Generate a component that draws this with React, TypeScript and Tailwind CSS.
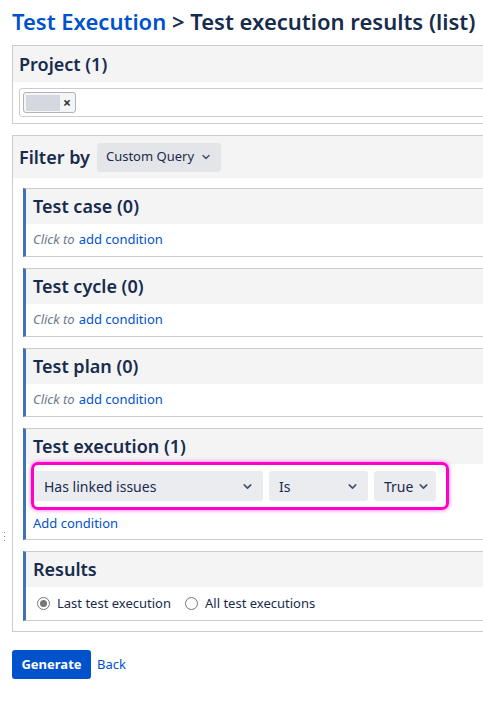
import { ChevronDown } from 'lucide-react';

const font = { fontFamily: '"Noto Sans", "Open Sans", sans-serif' };

function Select({ label, width, small }: { label: string; width: string; small?: boolean }) {
  return (
    <div className={`${width} h-[30px] rounded-[3px] bg-[#ebecf0] flex items-center justify-between gap-[4px] pl-[10px] ${small ? 'pr-[6px]' : 'pr-[9px]'} text-[14px] text-[#172b4d]`}>
      <span>{label}</span>
      <ChevronDown className="w-[13px] h-[13px] text-[#42526e] shrink-0" strokeWidth={3} />
    </div>
  );
}

function AddCondition() {
  return (
    <div className="h-[32px] flex items-center px-[7px] text-[13px]">
      <span className="italic text-[#6b778c]">Click to</span>
      <span className="ml-[4px] text-[#0052cc]">add condition</span>
    </div>
  );
}

function Section({ title, children }: { title: string; children: React.ReactNode }) {
  return (
    <div className="border-y border-[#ccc] border-l-[3px] border-l-[#3d74b1] bg-white">
      <div className="h-[35px] bg-[#f4f4f4] flex items-center px-[7px] text-[18px] font-semibold text-[#172b4d]">
        {title}
      </div>
      {children}
    </div>
  );
}

function Radio({ checked, label }: { checked?: boolean; label: string }) {
  return (
    <label className="flex items-center gap-[7px]">
      <span className="w-[13px] h-[13px] rounded-full border border-[#767676] bg-white flex items-center justify-center">
        {checked && <span className="w-[7px] h-[7px] rounded-full bg-[#777]" />}
      </span>
      <span>{label}</span>
    </label>
  );
}

export default function App() {
  return (
    <div className="relative w-[483px] h-[703px] overflow-hidden bg-white pl-[12px] pt-[5px]" style={font}>
      <h1 className="leading-[32px] text-[22px] font-semibold text-[#172b4d] whitespace-nowrap">
        <span className="text-[#0052cc]">Test Execution</span> &gt; Test execution results (list)
      </h1>

      <div className="mt-[8px] w-[520px] border border-[#ccc]">
        <div className="h-[36px] bg-[#f4f4f4] flex items-center px-[6px] text-[18px] font-semibold text-[#172b4d]">
          Project (1)
        </div>
        <div className="p-[6px]">
          <div className="h-[29px] border border-[#ccc] rounded-[3px] flex items-center px-[3px]">
            <div className="h-[21px] w-[53px] border border-[#b3b3b3] rounded-[3px] bg-[#f4f5f7] flex items-center pl-[2px] gap-[3px]">
              <span className="w-[34px] h-[16px] bg-[#d5d8de]" />
              <span className="text-[14px] font-bold text-[#333] leading-none">×</span>
            </div>
          </div>
        </div>
      </div>

      <div className="mt-[11px] w-[520px] border border-[#ccc]">
        <div className="h-[42px] bg-[#f4f4f4] flex items-center px-[6px] gap-[7px]">
          <span className="text-[18px] font-semibold text-[#172b4d]">Filter by</span>
          <div className="h-[29px] w-[124px] rounded-[3px] bg-[#e4e5e9] flex items-center justify-center gap-[6px] text-[13px] text-[#172b4d]">
            <span>Custom Query</span>
            <ChevronDown className="w-[12px] h-[12px] text-[#42526e]" strokeWidth={3} />
          </div>
        </div>
        <div className="p-[10px] flex flex-col gap-[11px]">
          <Section title="Test case (0)">
            <AddCondition />
          </Section>
          <Section title="Test cycle (0)">
            <AddCondition />
          </Section>
          <Section title="Test plan (0)">
            <AddCondition />
          </Section>
          <Section title="Test execution (1)">
            <div className="px-[7px] pt-[7px] pb-[6px]">
              <div className="relative flex gap-[6px] ml-[1px]">
                <Select label="Has linked issues" width="w-[229px]" />
                <Select label="Is" width="w-[99px]" />
                <Select label="True" width="w-[62px]" small />
                <div className="absolute left-[-3px] top-[-9px] w-[418px] h-[48px] border-[3px] border-[#ff00c8] rounded-[7px] shadow-[0_0_4px_#ff66dd]" />
              </div>
              <div className="mt-[12px] text-[13px] text-[#0052cc] leading-[20px]">Add condition</div>
            </div>
          </Section>
          <Section title="Results">
            <div className="h-[33px] flex items-center gap-[14px] pl-[11px] text-[13px] text-[#172b4d]">
              <Radio checked label="Last test execution" />
              <Radio label="All test executions" />
            </div>
          </Section>
        </div>
      </div>

      <div className="mt-[18px] flex items-center gap-[6px]">
        <button className="h-[29px] w-[79px] rounded-[3px] bg-[#0052cc] text-white text-[13px] font-bold">
          Generate
        </button>
        <span className="text-[13px] text-[#0052cc]">Back</span>
      </div>

      <div className="absolute left-[4px] top-[532px] flex flex-col gap-[3px]">
        <span className="w-[1px] h-[1px] bg-[#888]" />
        <span className="w-[1px] h-[1px] bg-[#888]" />
        <span className="w-[1px] h-[1px] bg-[#888]" />
      </div>
    </div>
  );
}
